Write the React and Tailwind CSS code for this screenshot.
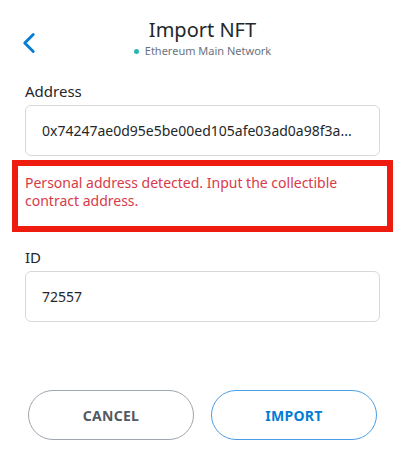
import { ChevronLeft } from "lucide-react";

function Field({ label, value, className = "" }) {
  return (
    <div className={className}>
      <div className="text-[15px] text-[#24272a] leading-[20px] mb-[4px]">{label}</div>
      <div className="h-[51px] border border-[#d6d9dc] rounded-[6px] flex items-center pl-[16px] pr-[14px] text-[14px] text-[#24272a] overflow-hidden whitespace-nowrap">
        {value}
      </div>
    </div>
  );
}

export default function App() {
  return (
    <div
      className="w-[405px] h-[458px] bg-white relative overflow-hidden"
      style={{ fontFamily: "'Noto Sans', 'Liberation Sans', sans-serif" }}
    >
      <div className="relative flex flex-col items-center pt-[17px]">
        <button className="absolute left-[12px] top-[26px] text-[#037dd6]">
          <ChevronLeft size={34} strokeWidth={2} />
        </button>
        <div className="text-[20px] leading-[25px] text-[#24272a]">Import NFT</div>
        <div className="flex items-center gap-[6px] mt-[2px] text-[11px] leading-[14px] text-[#6a737d]">
          <span className="w-[5px] h-[5px] rounded-full bg-[#29b6af]" />
          Ethereum Main Network
        </div>
      </div>

      <div className="px-[25px] mt-[23px]">
        <Field label="Address" value="0x74247ae0d95e5be00ed105afe03ad0a98f3a..." />
      </div>

      <div className="mx-[12px] mt-[4px] h-[72px] border-[6px] border-[#ee1c0e] px-[7px] pt-[8px] text-[14px] leading-[18px] text-[#d73a49]">
        Personal address detected. Input the collectible contract address.
      </div>

      <div className="px-[25px] mt-[15px]">
        <Field label="ID" value="72557" />
      </div>

      <div className="flex gap-[17px] pl-[28px] mt-[68px]">
        <button className="w-[166px] h-[50px] rounded-full border-[1.5px] border-[#9fa6ae] text-[14px] font-bold tracking-[0.3px] text-[#535a61]">
          CANCEL
        </button>
        <button className="w-[166px] h-[50px] rounded-full border-[1.5px] border-[#4a9ee6] text-[14px] font-bold tracking-[0.3px] text-[#037dd6]">
          IMPORT
        </button>
      </div>
    </div>
  );
}
